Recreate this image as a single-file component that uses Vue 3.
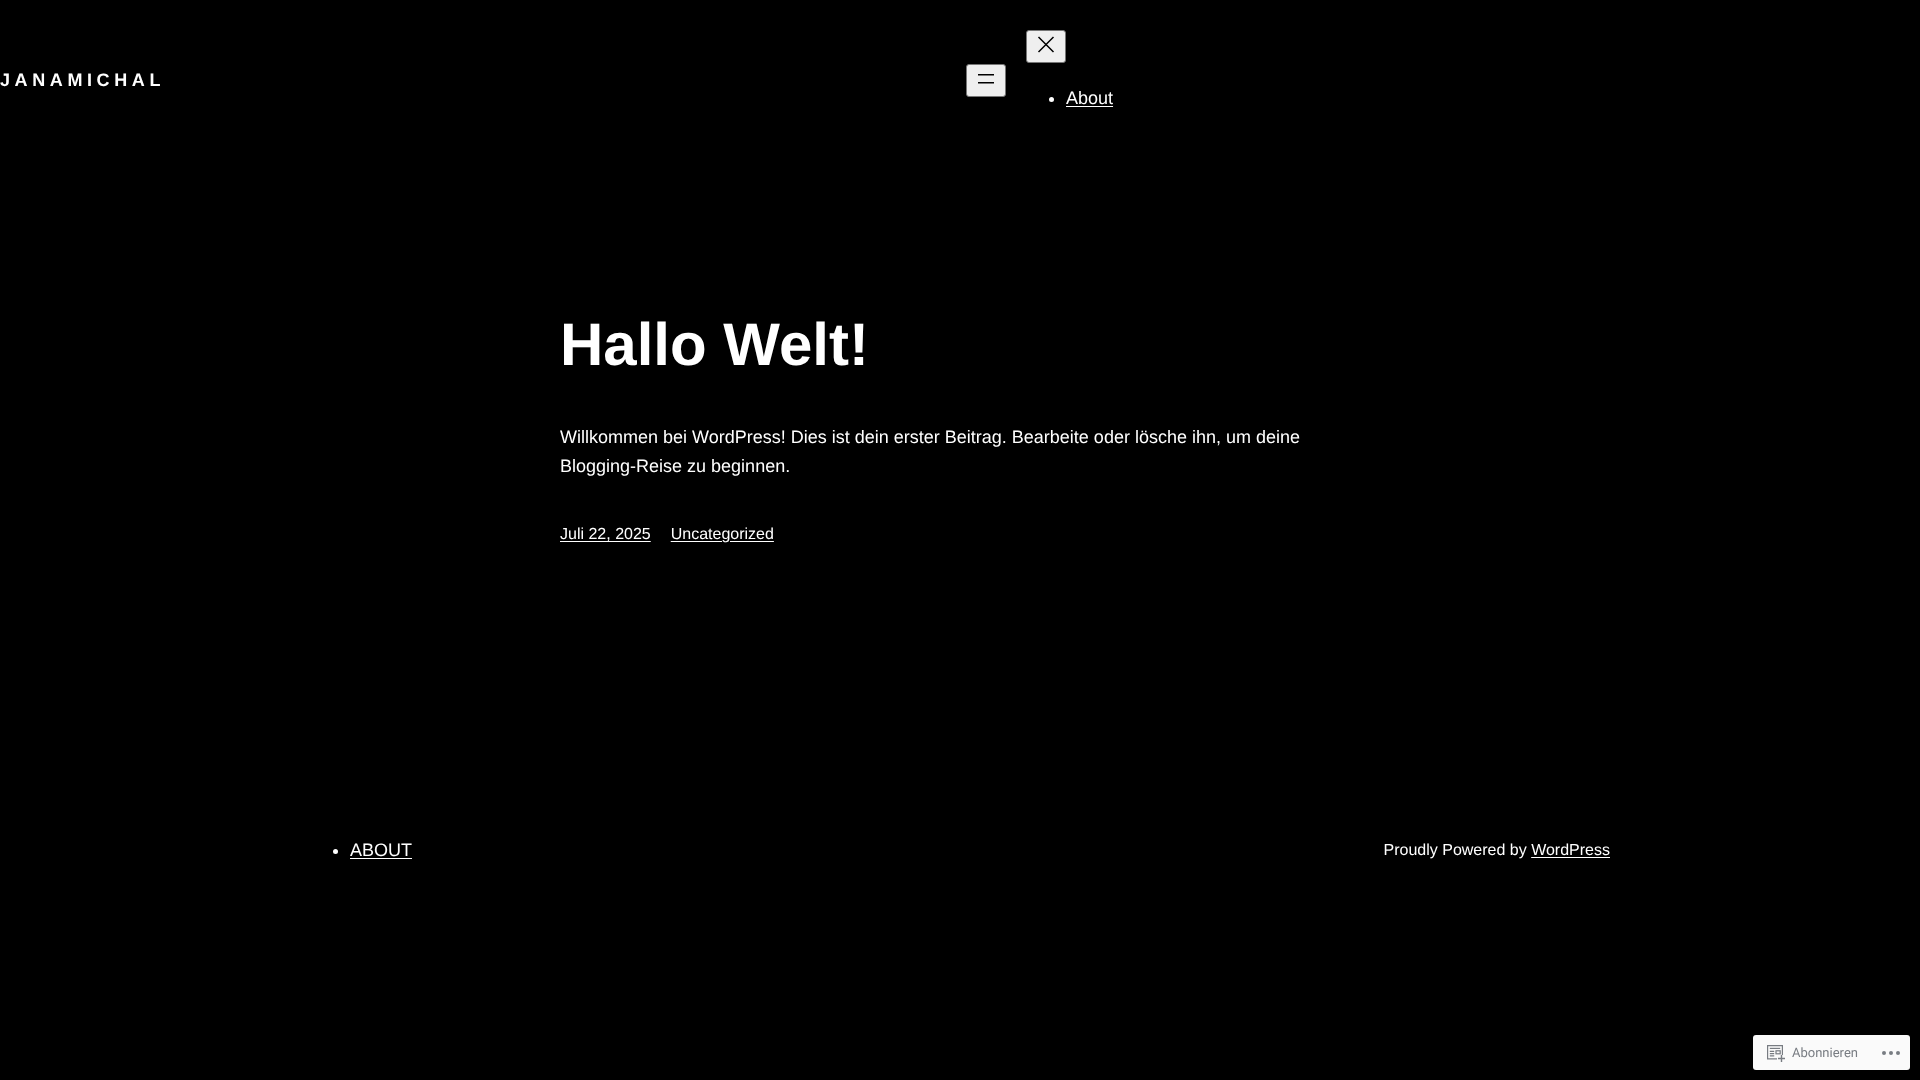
<script setup>
const navLabel = 'About'
</script>

<template>
  <div class="page">
    <header class="site-header">
      <a class="site-title">JANAMICHAL</a>
      <nav class="nav">
        <button class="icon-btn" aria-label="Menü öffnen">
          <svg width="24" height="24" viewBox="0 0 24 24"><path d="M4 6h16v1.5H4zM4 14h16v1.5H4z" fill="#000" /></svg>
        </button>
        <div class="overlay-menu">
          <button class="icon-btn" aria-label="Menü schließen">
            <svg width="24" height="24" viewBox="0 0 24 24"><path d="M4.5 3l15 15M19.5 3l-15 15" fill="none" stroke="#000" stroke-width="1.5" /></svg>
          </button>
          <ul class="nav-list">
            <li><a>{{ navLabel }}</a></li>
          </ul>
        </div>
      </nav>
    </header>

    <main class="post">
      <h1 class="post-title">Hallo Welt!</h1>
      <p class="post-body">Willkommen bei WordPress! Dies ist dein erster Beitrag. Bearbeite oder lösche ihn, um deine Blogging-Reise zu beginnen.</p>
      <div class="post-meta">
        <a>Juli 22, 2025</a>
        <a>Uncategorized</a>
      </div>
    </main>

    <footer class="site-footer">
      <ul class="footer-list">
        <li><a>ABOUT</a></li>
      </ul>
      <p class="credit">Proudly Powered by <a>WordPress</a></p>
    </footer>

    <div class="subscribe">
      <div class="sub-main">
        <svg width="20" height="20" viewBox="0 0 20 20" fill="none" stroke="#787c82" stroke-width="1.2">
          <path d="M15.4 12V2.6H.6v13.2H10" />
          <path d="M2.8 5.4h10.4" />
          <path d="M2.8 8.4h4.4M2.8 10.6h4.4M2.8 12.8h4.4" />
          <rect x="9" y="7.8" width="4.2" height="3" />
          <path d="M14.5 12v7M11 15.5h7" stroke-width="1.4" />
        </svg>
        <span class="sub-label">Abonnieren</span>
      </div>
      <div class="sub-more"><i></i><i></i><i></i></div>
    </div>
  </div>
</template>

<style scoped>
.page {
  min-height: 1080px;
  color: #fff;
  font-family: "Liberation Sans", Arial, sans-serif;
  text-rendering: geometricPrecision;
  will-change: transform;
}
a {
  color: inherit;
  text-decoration: underline;
  text-underline-offset: 2px;
}
.site-header {
  display: flex;
  align-items: center;
  height: 160px;
}
.site-title {
  width: 966px;
  font-size: 18px;
  font-weight: 700;
  letter-spacing: 4.6px;
  text-decoration: none;
}
.nav {
  display: flex;
  align-items: center;
  gap: 20px;
}
.overlay-menu {
  display: flex;
  flex-direction: column;
  align-items: flex-start;
}
.icon-btn {
  display: flex;
  align-items: center;
  justify-content: center;
  width: 40px;
  height: 33px;
  padding: 0;
  background: #efefef;
  border: 1px solid #767676;
  border-radius: 3px;
}
.nav-list {
  list-style: disc;
  margin: 21px 0 18px;
  padding: 0 0 0 40px;
  font-size: 18px;
  line-height: 29px;
}
.post {
  width: 800px;
  margin: 0 auto;
  padding-top: 149px;
}
.post-title {
  margin: 0;
  font-size: 60px;
  line-height: 72px;
  font-weight: 700;
}
.post-body {
  margin: 42px 0 0;
  font-size: 18px;
  line-height: 29px;
}
.post-meta {
  display: flex;
  gap: 20px;
  margin-top: 44px;
  font-size: 16px;
  line-height: 19px;
}
.site-footer {
  display: flex;
  justify-content: space-between;
  align-items: center;
  width: 1300px;
  margin: 0 auto;
  padding-top: 296px;
}
.footer-list {
  list-style: disc;
  margin: 0;
  padding: 0 0 0 40px;
  font-size: 18px;
  line-height: 21px;
}
.credit {
  margin: 0;
  font-size: 16px;
  line-height: 19px;
}
.subscribe {
  position: fixed;
  right: 10px;
  bottom: 10px;
  display: flex;
  align-items: center;
  justify-content: space-between;
  width: 157px;
  height: 35px;
  box-sizing: border-box;
  padding: 0 10px 0 14px;
  background: #fafafa;
  border-radius: 3px;
  color: #787c82;
  font-family: Roboto, "Liberation Sans", sans-serif;
  font-size: 13px;
}
.sub-main {
  display: flex;
  align-items: center;
  gap: 5px;
}
.sub-label {
  padding-top: 1px;
}
.sub-more {
  display: flex;
  gap: 3px;
}
.sub-more i {
  display: block;
  width: 4px;
  height: 4px;
  border-radius: 50%;
  background: #787c82;
}
</style>

<style>
html, body { background: #000; }
</style>
